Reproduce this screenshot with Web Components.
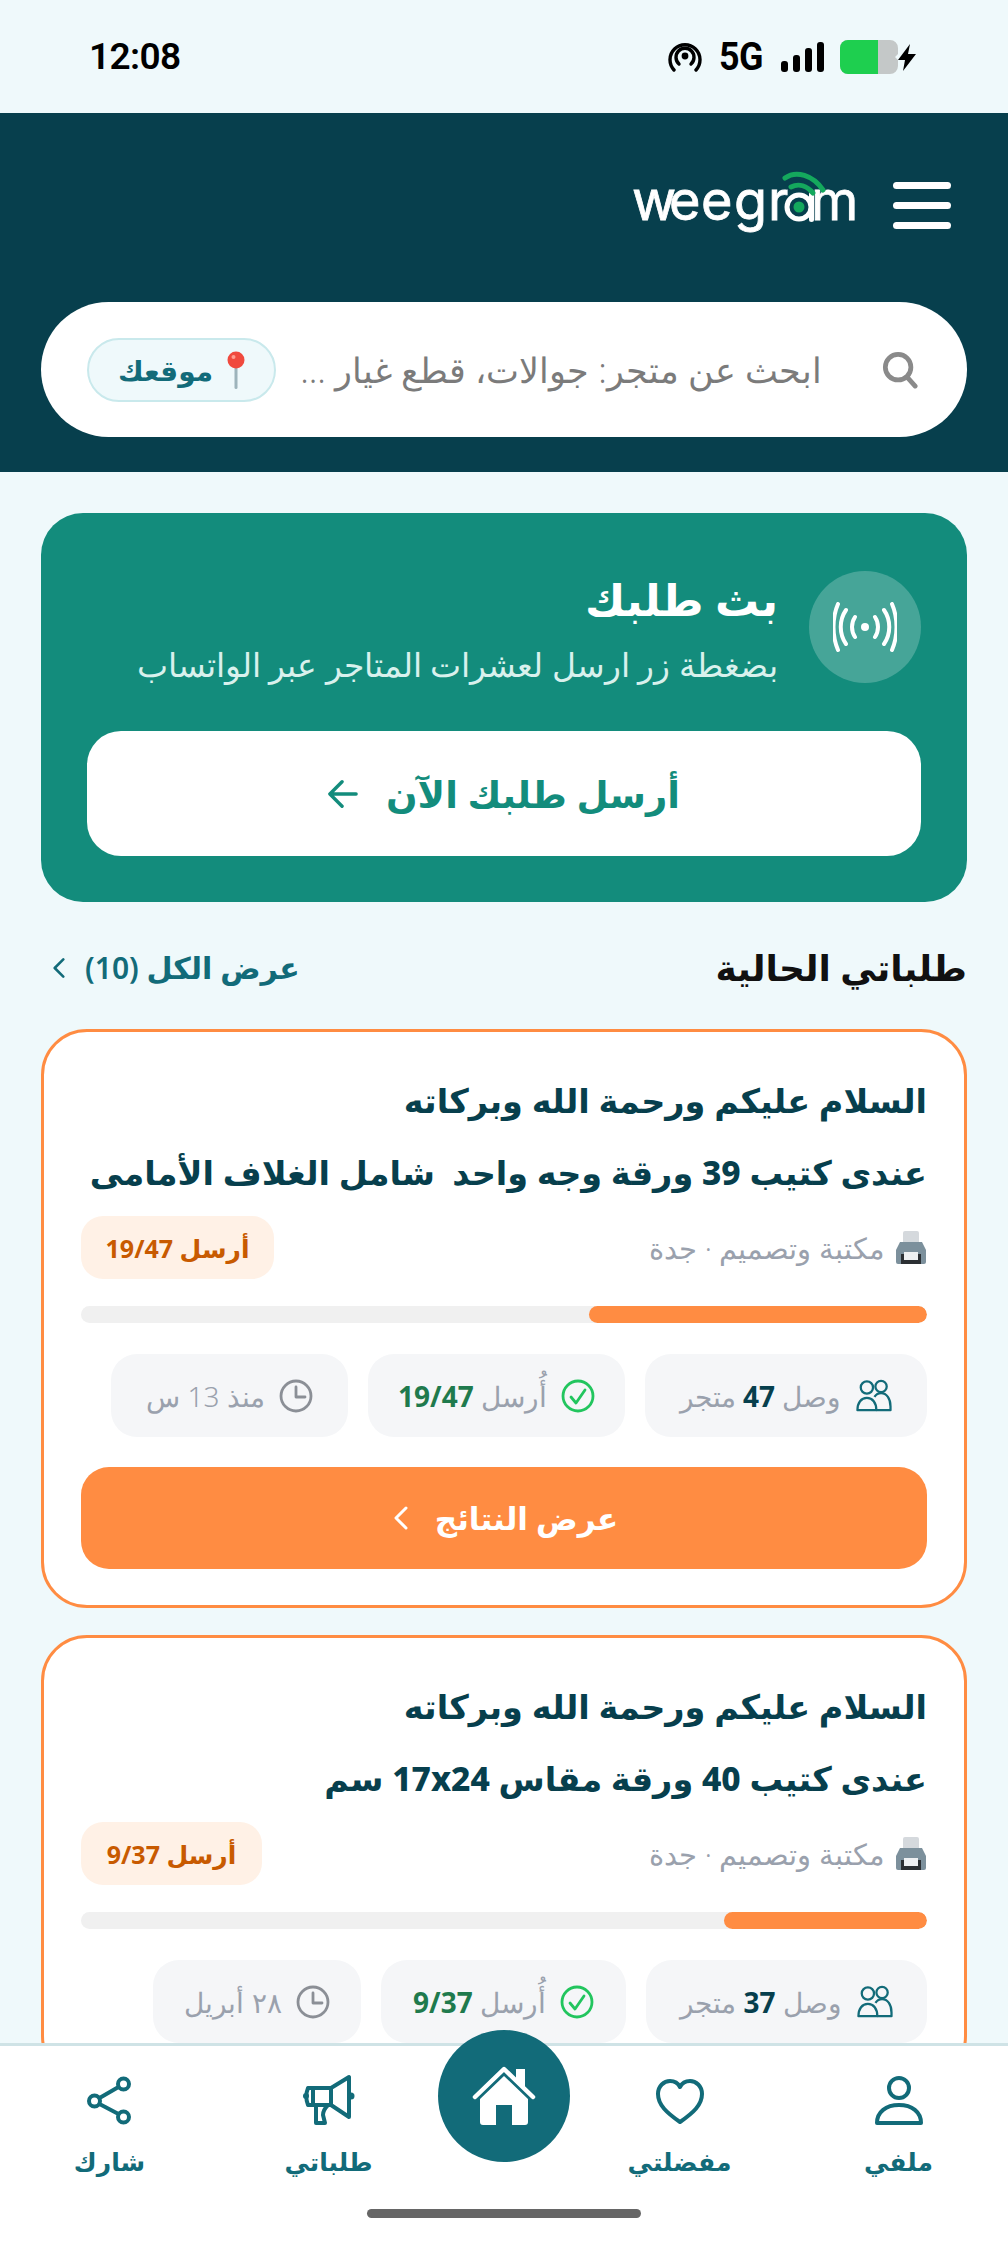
<!DOCTYPE html>
<html lang="ar" dir="rtl">
<head>
<meta charset="utf-8">
<title>weegram</title>
<style>
  html, body { margin: 0; height: 100%; background: #eff9fb; }
  body { font-family: "Noto Sans", "DejaVu Sans", sans-serif; overflow: hidden; }
  wg-app { height: 100vh; }
</style>
</head>
<body>
<wg-app>
  <wg-status-bar slot="top"></wg-status-bar>
  <wg-header slot="top"></wg-header>

  <wg-hero></wg-hero>
  <wg-section-head count="10">طلباتي الحالية</wg-section-head>

  <wg-order-card progress="40" badge="أرسل 19/47" sent="19/47" reached="47" time="منذ 13 س" time-width="237" sent-width="257" reached-width="282" badge-width="193" show-button>
    <span slot="line1">السلام عليكم ورحمة الله وبركاته</span>
    <span slot="line2">عندى كتيب 39 ورقة وجه واحد  شامل الغلاف الأمامى</span>
  </wg-order-card>
  <wg-order-card progress="24" badge="أرسل 9/37" sent="9/37" reached="37" time="٢٨ أبريل" time-width="208" sent-width="245" reached-width="281" badge-width="181">
    <span slot="line1">السلام عليكم ورحمة الله وبركاته</span>
    <span slot="line2">عندى كتيب 40 ورقة مقاس 17x24 سم</span>
  </wg-order-card>

  <wg-bottom-nav slot="bottom"></wg-bottom-nav>
</wg-app>

<script>
const ICONS = {
  user: '<circle cx="25" cy="12" r="10"/><path d="M3 47c0-11 9-18 22-18s22 7 22 18z"/>',
  heart: '<path d="M25 46C12 37 3 29 3 18 3 10 9 5 15 5c5 0 8 2 10 6 2-4 5-6 10-6 6 0 12 5 12 13 0 11-9 19-22 28z"/>',
  megaphone: '<path d="M4 12h23v17H4c-2-5-2-12 0-17zM9 12v17M27 12 45 1v40L27 29M12 29v18h9l-2-8c0-4 2-7 5-10"/><circle cx="47" cy="20" r="3.5" fill="#126b79" stroke="none"/><circle cx="2" cy="20" r="3" fill="#126b79" stroke="none"/>',
  share: '<circle cx="38.5" cy="8" r="5.5"/><circle cx="9.5" cy="25" r="5.5"/><circle cx="38.5" cy="41" r="5.5"/><path d="M14.5 22 33.5 11M14.5 28l19 10"/>'
};

class WgApp extends HTMLElement {
  constructor() {
    super();
    this.attachShadow({ mode: 'open' }).innerHTML = `
      <style>
        :host { display: flex; flex-direction: column; direction: rtl; }
        main { flex: 1; min-height: 0; overflow: hidden; padding: 41px 41px 0; display: flex; flex-direction: column; }
      </style>
      <slot name="top"></slot>
      <main><slot></slot></main>
      <slot name="bottom"></slot>`;
  }
}

class WgStatusBar extends HTMLElement {
  constructor() {
    super();
    this.attachShadow({ mode: 'open' }).innerHTML = `
      <style>
        :host { display: flex; direction: ltr; height: 113px; align-items: center; justify-content: space-between; padding: 0 90px 0 89px; box-sizing: border-box; background: #eff9fb; color: #000; font-family: Roboto, sans-serif; font-weight: 700; }
        .time { font-size: 37px; letter-spacing: -.6px; font-weight: 600; }
        .right { display: flex; align-items: center; }
        .g { font-size: 39px; letter-spacing: -.5px; margin: 0 16px 0 15px; transform: scaleX(.92); }
        svg { display: block; }
      </style>
      <span class="time">12:08</span>
      <div class="right">
        <svg width="34" height="30" viewBox="0 0 34 30" fill="none" stroke="#000" stroke-width="3.4" stroke-linecap="round">
          <circle cx="17" cy="14" r="3.4" fill="#000" stroke="none"/>
          <path d="M11 22a9 9 0 1 1 12 0"/><path d="M6 28a15 15 0 1 1 22 0"/>
        </svg>
        <span class="g">5G</span>
        <svg width="43" height="30" viewBox="0 0 43 30" fill="#000"><rect x="0" y="19" width="7" height="11" rx="3"/><rect x="12" y="13" width="7" height="17" rx="3"/><rect x="24" y="6" width="7" height="24" rx="3"/><rect x="36" y="0" width="7" height="30" rx="3"/></svg>
        <svg style="margin-left:16px" width="78" height="34" viewBox="0 0 78 34">
          <path d="M8 0H50a8 8 0 0 1 8 8v6l-3 3 3 3v6a8 8 0 0 1-8 8H8a8 8 0 0 1-8-8V8a8 8 0 0 1 8-8z" fill="#c4c8c8"/>
          <path d="M8 0H38V34H8a8 8 0 0 1-8-8V8a8 8 0 0 1 8-8z" fill="#1ecf4f"/>
          <path d="M70 4 58 20h7l-2 11 13-17h-8z" fill="#000"/>
        </svg>
      </div>`;
  }
}

class WgHeader extends HTMLElement {
  constructor() {
    super();
    this.attachShadow({ mode: 'open' }).innerHTML = `
      <style>
        :host { display: block; background: #073f4d; height: 359px; box-sizing: border-box; padding: 45px 41px 0; }
        .top { display: flex; align-items: center; gap: 38px; padding: 0 16px 0 0; height: 98px; }
        .burger { width: 58px; margin-top: -3px; display: flex; flex-direction: column; gap: 13px; }
        .burger i { display: block; height: 7px; border-radius: 4px; background: #fff; }
        svg.logo { display: block; direction: ltr; overflow: visible; }
        text { font: 400 54px Inter, Lato, sans-serif; fill: #fff; stroke: #fff; stroke-width: .8px; }
      </style>
      <div class="top">
        <div class="burger"><i></i><i></i><i></i></div>
        <svg class="logo" width="224" height="98" viewBox="0 0 224 98">
          <!-- the a is hidden in the text and drawn below, the logo uses a round one -->
          <text x="1 38 70 103 137 155 180" y="62">weegr<tspan fill="none" stroke="none">a</tspan>m</text>
          <circle cx="168" cy="49" r="12" fill="none" stroke="#fff" stroke-width="5"/>
          <path d="M180.5 36V61.5" fill="none" stroke="#fff" stroke-width="5" stroke-linecap="round"/>
          <g fill="none" stroke="#14a85d" stroke-width="5" stroke-linecap="round">
            <path d="M154 20C165 12 182 17 192 32"/><path d="M160 29C168 25 176 28 182 35"/>
          </g>
          <circle cx="168" cy="49" r="5.5" fill="#14a85d"/>
        </svg>
      </div>
      <wg-search></wg-search>`;
  }
}

class WgSearch extends HTMLElement {
  constructor() {
    super();
    this.attachShadow({ mode: 'open' }).innerHTML = `
      <style>
        :host { display: flex; align-items: center; margin-top: 46px; height: 135px; border-radius: 68px; background: #fff; padding: 0 49px 0 46px; box-sizing: border-box; }
        .ph { flex: 1; font-size: 35px; font-weight: 300; color: #7b7b7b; padding-right: 60px; white-space: nowrap; overflow: hidden; }
        .chip { display: flex; align-items: center; justify-content: center; gap: 14px; width: 189px; height: 64px; box-sizing: border-box; border: 2px solid #c9e9ec; border-radius: 32px; background: #eff9fb; color: #126b79; font-size: 28px; font-weight: 700; }
      </style>
      <svg width="36" height="38" viewBox="0 0 38 40" fill="none" stroke="#8a8a8a" stroke-width="5" stroke-linecap="round"><circle cx="17" cy="17" r="13.5"/><path d="M27 28l8 9"/></svg>
      <span class="ph">ابحث عن متجر: جوالات، قطع غيار ...</span>
      <span class="chip">
        <svg width="18" height="38" viewBox="0 0 18 38"><rect x="7.5" y="12" width="3" height="26" rx="1.5" fill="#9db4bb"/><circle cx="9" cy="9" r="8.5" fill="#f04a3e"/><circle cx="6.5" cy="6" r="2" fill="#ff9d8f"/></svg>
        موقعك
      </span>`;
  }
}

class WgHero extends HTMLElement {
  constructor() {
    super();
    this.attachShadow({ mode: 'open' }).innerHTML = `
      <style>
        :host { display: block; flex: none; background: #138c7c; border-radius: 42px; padding: 58px 46px 46px; height: 389px; box-sizing: border-box; color: #fff; }
        .top { display: flex; align-items: center; gap: 31px; height: 112px; }
        .ic { width: 112px; height: 112px; border-radius: 50%; background: rgba(255,255,255,.22); display: flex; align-items: center; justify-content: center; flex: none; }
        .txt { padding-top: 3px; }
        h2 { margin: 0; font-size: 44px; font-weight: 800; line-height: 60px; }
        p { margin: 13px 0 0; font-size: 33px; font-weight: 300; line-height: 46px; color: #d9f1ed; white-space: nowrap; }
        .btn { margin-top: 48px; height: 125px; border-radius: 34px; background: #fff; color: #138c7c; display: flex; align-items: center; justify-content: center; gap: 28px; font-size: 37px; font-weight: 800; }
      </style>
      <div class="top">
        <div class="ic">
          <svg width="64" height="50" viewBox="0 0 64 50" fill="none" stroke="#fff" stroke-width="4" stroke-linecap="round">
            <circle cx="32" cy="25" r="4" fill="#fff" stroke="none"/>
            <path d="M22 15c-4 6-4 14 0 20M42 15c4 6 4 14 0 20M13 8c-7 10-7 24 0 34M51 8c7 10 7 24 0 34M5 2c-6 14-6 32 0 46M59 2c6 14 6 32 0 46"/>
          </svg>
        </div>
        <div class="txt">
          <h2>بث طلبك</h2>
          <p>بضغطة زر ارسل لعشرات المتاجر عبر الواتساب</p>
        </div>
      </div>
      <div class="btn">
        <span>أرسل طلبك الآن</span>
        <svg width="30" height="30" viewBox="0 0 32 32" fill="none" stroke="#138c7c" stroke-width="3.6" stroke-linecap="round" stroke-linejoin="round"><path d="M30 16H3M15 3 2 16l13 13"/></svg>
      </div>`;
  }
}

class WgSectionHead extends HTMLElement {
  constructor() {
    super();
    this.attachShadow({ mode: 'open' }).innerHTML = `
      <style>
        :host { display: flex; flex: none; align-items: center; justify-content: space-between; height: 123px; padding-top: 4px; }
        h3 { margin: 0; font-size: 36px; font-weight: 700; color: #111; }
        a { display: flex; align-items: center; gap: 20px; padding-left: 12px; font-size: 30px; font-weight: 600; color: #126b79; }
      </style>
      <h3><slot></slot></h3>
      <a><span>عرض الكل (<span class="n"></span>)</span>
        <svg width="12" height="22" viewBox="0 0 14 24" fill="none" stroke="#126b79" stroke-width="3" stroke-linecap="round" stroke-linejoin="round"><path d="M12 2 2 12l10 10"/></svg>
      </a>`;
  }
  connectedCallback() {
    this.shadowRoot.querySelector('.n').textContent = this.getAttribute('count');
  }
}

class WgStatChip extends HTMLElement {
  constructor() {
    super();
    this.attachShadow({ mode: 'open' }).innerHTML = `
      <style>
        :host { display: flex; flex: none; align-items: center; justify-content: center; gap: 14px; height: 83px; box-sizing: border-box; border-radius: 26px; background: #f5f6f8; color: #9aa1ad; font-size: 28px; font-weight: 300; white-space: nowrap; }
        ::slotted(b) { font-weight: 700; }
      </style>
      <slot name="icon"></slot><span><slot></slot></span>`;
  }
}

class WgOrderCard extends HTMLElement {
  constructor() {
    super();
    this.attachShadow({ mode: 'open' }).innerHTML = `
      <style>
        :host { display: block; flex: none; box-sizing: border-box; background: #fff; border: 3px solid #ff8c42; border-radius: 46px; padding: 32px 37px 36px; margin-bottom: 27px; }
        .t { font-size: 33.5px; font-weight: 800; color: #073f4d; line-height: 72px; white-space: pre; }
        .meta { display: flex; align-items: center; justify-content: space-between; margin-top: 8px; }
        .shop { display: flex; align-items: center; gap: 10px; font-size: 29px; font-weight: 300; color: #9aa1ad; }
        .badge { display: flex; align-items: center; justify-content: center; box-sizing: border-box; height: 63px; border-radius: 22px; background: #fff1e6; color: #c85a00; font-size: 25px; font-weight: 700; }
        .bar { height: 17px; border-radius: 9px; background: #f0f0f0; margin-top: 27px; overflow: hidden; }
        .bar i { display: block; height: 100%; border-radius: 9px; background: #ff8c42; }
        .chips { display: flex; gap: 20px; margin-top: 31px; }
        .btn { display: flex; align-items: center; justify-content: center; gap: 27px; height: 102px; margin-top: 30px; padding-left: 4px; border-radius: 28px; background: #ff8c42; color: #fff; font-size: 31px; font-weight: 600; }
        .green { color: #1f7a4d; font-weight: 700; }
        .dark { color: #073f4d; font-weight: 700; }
      </style>
      <div class="t"><slot name="line1"></slot></div>
      <div class="t"><slot name="line2"></slot></div>
      <div class="meta">
        <span class="shop">
          <svg width="32" height="36" viewBox="0 0 32 36"><rect x="8" y="1" width="16" height="14" rx="2" fill="#d5d9dd"/><path d="M5 12h22l4 8v12a2 2 0 0 1-2 2H3a2 2 0 0 1-2-2V20z" fill="#7c909c"/><rect x="6" y="24" width="20" height="10" fill="#2b2f33"/><rect x="9" y="22" width="14" height="8" fill="#eef0f2"/></svg>
          مكتبة وتصميم · جدة
        </span>
        <span class="badge"></span>
      </div>
      <div class="bar"><i></i></div>
      <div class="chips">
        <wg-stat-chip class="c1">
          <svg slot="icon" width="37" height="34" viewBox="0 0 38 36" fill="none" stroke="#126b79" stroke-width="2.4" stroke-linejoin="round"><circle cx="12" cy="9" r="6.5"/><circle cx="27" cy="8" r="6"/><path d="M2 33c0-8 4-13 10-13s10 5 10 13z"/><path d="M20 19c2-3 4-4 7-4 6 0 10 6 10 14v4H22"/></svg>
          وصل <b class="dark r"></b> متجر
        </wg-stat-chip>
        <wg-stat-chip class="c2">
          <svg slot="icon" width="34" height="34" viewBox="0 0 34 34" fill="none" stroke="#22c55e" stroke-width="2.8" stroke-linecap="round" stroke-linejoin="round"><circle cx="17" cy="17" r="15"/><path d="M10 18l5 6 9-13"/></svg>
          أُرسل <b class="green s"></b>
        </wg-stat-chip>
        <wg-stat-chip class="c3">
          <svg slot="icon" width="34" height="34" viewBox="0 0 34 34" fill="none" stroke="#8b8f96" stroke-width="2.8" stroke-linecap="round" stroke-linejoin="round"><circle cx="17" cy="17" r="15"/><path d="M17 8v10h9"/></svg>
          <span class="w"></span>
        </wg-stat-chip>
      </div>
      <div class="btn">
        <span>عرض النتائج</span>
        <svg width="14" height="24" viewBox="0 0 14 24" fill="none" stroke="#fff" stroke-width="3" stroke-linecap="round" stroke-linejoin="round"><path d="M12 2 2 12l10 10"/></svg>
      </div>`;
  }
  connectedCallback() {
    const $ = s => this.shadowRoot.querySelector(s);
    const attr = n => this.getAttribute(n);
    $('.badge').textContent = attr('badge');
    $('.badge').style.width = attr('badge-width') + 'px';
    $('.bar i').style.width = attr('progress') + '%';
    $('.r').textContent = attr('reached');
    $('.s').textContent = attr('sent');
    $('.w').textContent = attr('time');
    $('.c1').style.width = attr('reached-width') + 'px';
    $('.c2').style.width = attr('sent-width') + 'px';
    $('.c3').style.width = attr('time-width') + 'px';
    if (!this.hasAttribute('show-button')) $('.btn').style.display = 'none';
  }
}

class WgNavItem extends HTMLElement {
  constructor() {
    super();
    this.attachShadow({ mode: 'open' }).innerHTML = `
      <style>
        :host { display: flex; flex-direction: column; align-items: center; gap: 18px; color: #126b79; font-size: 25px; font-weight: 700; white-space: nowrap; }
        svg { display: block; width: 50px; height: 50px; fill: none; stroke: #126b79; stroke-width: 4; stroke-linejoin: round; stroke-linecap: round; overflow: visible; }
      </style>
      <svg viewBox="0 0 50 50"></svg><span><slot></slot></span>`;
  }
  connectedCallback() {
    this.shadowRoot.querySelector('svg').innerHTML = ICONS[this.getAttribute('icon')];
  }
}

class WgBottomNav extends HTMLElement {
  constructor() {
    super();
    this.attachShadow({ mode: 'open' }).innerHTML = `
      <style>
        :host { display: block; position: relative; flex: none; height: 201px; box-sizing: border-box; background: #fff; border-top: 3px solid #cfe3e6; }
        .items { display: grid; grid-template-columns: 219px 219px 132px 219px 219px; padding-top: 30px; justify-items: center; }
        .home { position: absolute; left: 438px; top: -16px; width: 132px; height: 132px; border-radius: 50%; background: #126b79; display: flex; align-items: center; justify-content: center; }
        .pill { position: absolute; left: 367px; top: 163px; width: 274px; height: 9px; border-radius: 5px; background: #666; }
      </style>
      <div class="items">
        <wg-nav-item icon="user">ملفي</wg-nav-item>
        <wg-nav-item icon="heart">مفضلتي</wg-nav-item>
        <span></span>
        <wg-nav-item icon="megaphone">طلباتي</wg-nav-item>
        <wg-nav-item icon="share">شارك</wg-nav-item>
      </div>
      <div class="home">
        <svg width="64" height="60" viewBox="0 0 64 60"><path d="M8 33 32 10l24 23v23a3 3 0 0 1-3 3H40V39H24v20H11a3 3 0 0 1-3-3z" fill="#fff"/><path d="M3 31 32 3l29 28" fill="none" stroke="#fff" stroke-width="4.5" stroke-linecap="round" stroke-linejoin="round"/><path d="M44 3h9v19l-9-9z" fill="#fff"/></svg>
      </div>
      <div class="pill"></div>`;
  }
}

customElements.define('wg-app', WgApp);
customElements.define('wg-status-bar', WgStatusBar);
customElements.define('wg-header', WgHeader);
customElements.define('wg-search', WgSearch);
customElements.define('wg-hero', WgHero);
customElements.define('wg-section-head', WgSectionHead);
customElements.define('wg-stat-chip', WgStatChip);
customElements.define('wg-order-card', WgOrderCard);
customElements.define('wg-nav-item', WgNavItem);
customElements.define('wg-bottom-nav', WgBottomNav);
</script>
</body>
</html>
